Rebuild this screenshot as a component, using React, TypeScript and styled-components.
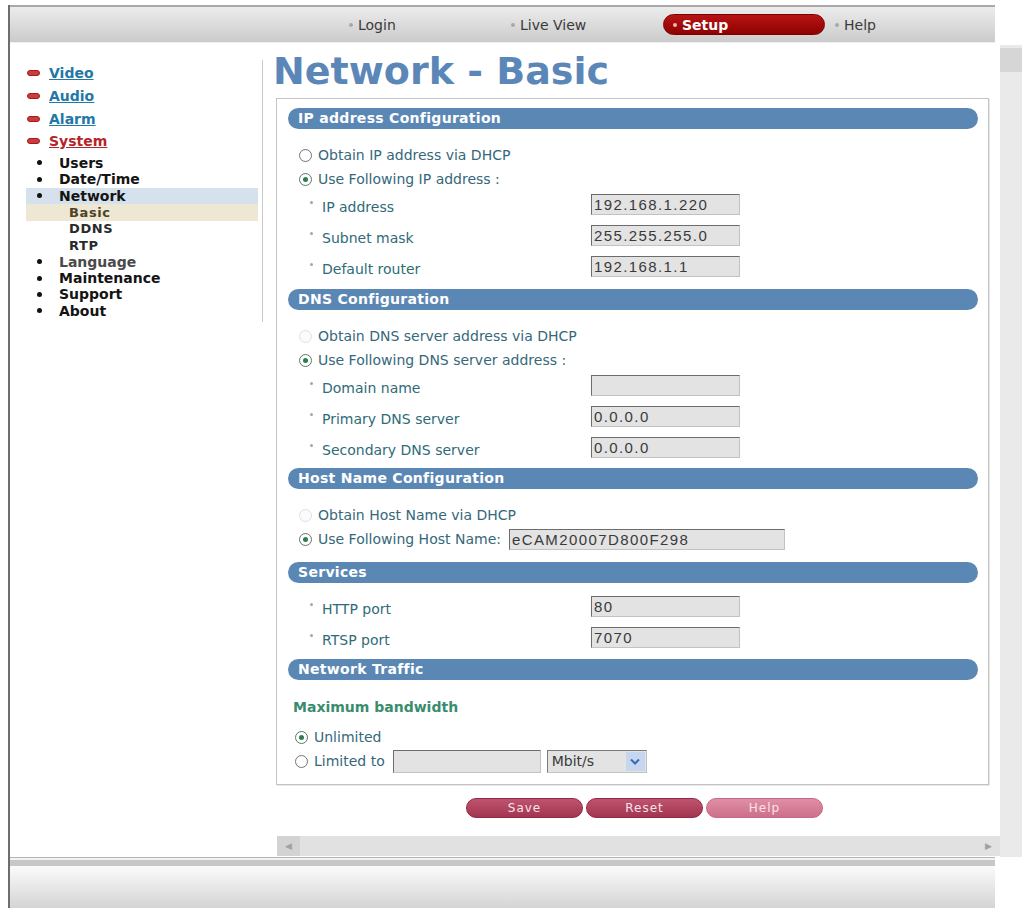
import React from "react";
import styled, { createGlobalStyle } from "styled-components";

const GlobalStyle = createGlobalStyle`
  html, body { margin: 0; padding: 0; background: #ffffff; }
  body { font-family: "DejaVu Sans", Verdana, sans-serif; }
`;

const Page = styled.div`
  width: 1029px;
  height: 912px;
  box-sizing: border-box;
  padding: 5px 0 0 8px;
  overflow: hidden;
  background: #fff;
`;

const Frame = styled.div`
  width: 1014px;
  height: 903px;
  box-sizing: border-box;
  border-left: 2px solid #6e6e6e;
  display: flex;
  flex-direction: column;
`;

const TopBar = styled.div`
  width: 985px;
  height: 38px;
  flex: none;
  box-sizing: border-box;
  border-top: 2px solid #a9a9a9;
  border-bottom: 1px solid #f1f1f1;
  background: linear-gradient(#ececec, #cbcbcb);
  display: flex;
  align-items: center;
  padding-left: 329px;
`;

const NavItem = styled.div<{ $active?: boolean }>`
  width: 162px;
  height: 21px;
  box-sizing: border-box;
  display: flex;
  align-items: center;
  gap: 5px;
  padding-left: 9px;
  border-radius: 11px;
  font-size: 14px;
  font-weight: ${(p) => (p.$active ? 700 : 400)};
  color: ${(p) => (p.$active ? "#ffffff" : "#3a3a3a")};
  background: ${(p) =>
    p.$active ? "linear-gradient(#b81414, #8e0202)" : "transparent"};
  border: ${(p) => (p.$active ? "1px solid #7a0000" : "1px solid transparent")};
`;

const NavDot = styled.span<{ $active?: boolean }>`
  width: 4px;
  height: 4px;
  border-radius: 50%;
  background: ${(p) => (p.$active ? "#f4b4b4" : "#a8a8a8")};
`;

const Middle = styled.div`
  display: flex;
  height: 814px;
  flex: none;
`;

const Sidebar = styled.div`
  width: 253px;
  flex: none;
  padding-top: 17px;
  box-sizing: border-box;
`;

const Menu = styled.div`
  width: 253px;
  box-sizing: border-box;
  border-right: 1px solid #c9c9c9;
  padding: 2px 0 3px 16px;
`;

const MainLink = styled.div`
  height: 22.7px;
  display: flex;
  align-items: center;
  gap: 9px;
  padding-left: 1px;
`;

const Pill = styled.span`
  width: 13px;
  height: 6px;
  box-sizing: border-box;
  border-radius: 3px;
  background: #cf3a3a;
  border: 1px solid #9c1d1d;
`;

const MainLinkText = styled.span<{ $color: string }>`
  font-size: 14px;
  font-weight: 700;
  text-decoration: underline;
  color: ${(p) => p.$color};
`;

const SubList = styled.div`
  margin-top: 2px;
`;

const SubItem = styled.div<{ $bg?: string; $color?: string }>`
  width: 232px;
  height: 16.44px;
  box-sizing: border-box;
  display: flex;
  align-items: center;
  padding-left: 11px;
  font-size: 14px;
  font-weight: 700;
  color: ${(p) => p.$color || "#141414"};
  background: ${(p) => p.$bg || "transparent"};
`;

const Bullet = styled.span`
  width: 5px;
  height: 5px;
  border-radius: 50%;
  background: #111;
  margin-right: 17px;
`;

const SubSubItem = styled.div<{ $bg?: string; $color?: string }>`
  width: 232px;
  height: 16.44px;
  box-sizing: border-box;
  display: flex;
  align-items: center;
  padding-left: 43px;
  font-size: 13px;
  font-weight: 700;
  letter-spacing: 0.6px;
  color: ${(p) => p.$color || "#2a2a2a"};
  background: ${(p) => p.$bg || "transparent"};
`;

const Main = styled.div`
  width: 759px;
  display: grid;
  grid-template-columns: 737px 22px;
  grid-template-rows: 793px 21px;
`;

const Content = styled.div`
  padding-left: 10px;
  overflow: hidden;
`;

const Title = styled.h1`
  margin: 7px 0 0 0;
  height: 43px;
  line-height: 43px;
  font-size: 38px;
  font-weight: 700;
  color: #5b87b8;
  font-family: "DejaVu Sans", Verdana, sans-serif;
`;

const Panel = styled.div`
  margin: 5px 0 0 3px;
  width: 713px;
  box-sizing: border-box;
  border: 1px solid #c4c4c4;
  box-shadow: 1px 1px 0 #e8e8e8;
  padding: 9px 10px 11px 11px;
`;

const SectionHeader = styled.div`
  height: 21px;
  line-height: 21px;
  border-radius: 11px;
  background: #5b87b5;
  color: #ffffff;
  font-size: 14px;
  font-weight: 700;
  letter-spacing: 0.3px;
  padding-left: 10px;
`;

const SectionBody = styled.div<{ $top: number; $bottom: number }>`
  padding-top: ${(p) => p.$top}px;
  padding-bottom: ${(p) => p.$bottom}px;
`;

const RadioRow = styled.div<{ $indent?: number }>`
  height: 24px;
  display: flex;
  align-items: center;
  padding-left: ${(p) => p.$indent ?? 11}px;
  font-size: 14px;
  color: #35687a;
`;

const RadioMark = styled.span<{ $checked?: boolean; $disabled?: boolean }>`
  position: relative;
  width: 13px;
  height: 13px;
  flex: none;
  box-sizing: border-box;
  border-radius: 50%;
  margin-right: 6px;
  border: 1px solid
    ${(p) => (p.$disabled ? "#e0e0e0" : p.$checked ? "#587a64" : "#737373")};
  background: ${(p) => (p.$disabled ? "#fbfbfb" : "#ffffff")};
  &::after {
    content: "";
    display: ${(p) => (p.$checked ? "block" : "none")};
    position: absolute;
    left: 3px;
    top: 3px;
    width: 5px;
    height: 5px;
    border-radius: 50%;
    background: #2f7d4d;
  }
`;

const FieldRow = styled.div`
  height: 31px;
  display: grid;
  grid-template-columns: 303px 149px;
  align-items: start;
`;

const FieldLabel = styled.div`
  height: 31px;
  display: flex;
  align-items: center;
  padding-left: 22px;
  font-size: 14px;
  color: #2f6b78;
`;

const LabelDot = styled.span`
  width: 3px;
  height: 3px;
  border-radius: 50%;
  background: #a0a8aa;
  margin-right: 9px;
  position: relative;
  top: -4px;
`;

const TextBox = styled.input<{ $w: number; $h?: number; $gap?: number }>`
  margin: 3px 0 0 0;
  width: ${(p) => p.$w}px;
  height: ${(p) => p.$h ?? 21}px;
  box-sizing: border-box;
  padding: 0 2px;
  background: #e3e3e3;
  border: 1px solid;
  border-color: #6c6c6c #c2c2c2 #c2c2c2 #6c6c6c;
  font-family: "Liberation Sans", Arial, sans-serif;
  font-size: 15px;
  letter-spacing: 1.4px;
  color: #3a3a3a;
  outline: none;
`;

const InlineBox = styled(TextBox)`
  margin: 0 0 0 ${(p) => p.$gap ?? 8}px;
`;

const Heading = styled.div`
  height: 26px;
  line-height: 26px;
  padding-left: 5px;
  font-size: 14px;
  font-weight: 700;
  color: #3a8c6e;
  margin-bottom: 5px;
`;

const SelectBox = styled.div`
  margin-left: 6px;
  width: 100px;
  height: 23px;
  box-sizing: border-box;
  border: 1px solid;
  border-color: #7a7a7a #c2c2c2 #c2c2c2 #7a7a7a;
  background: #e3e3e3;
  display: flex;
  align-items: center;
  justify-content: space-between;
  padding: 0 1px 0 4px;
  font-size: 14px;
  color: #3a3a3a;
`;

const ArrowBox = styled.span`
  width: 19px;
  height: 19px;
  background: #c6d6ee;
  display: flex;
  align-items: center;
  justify-content: center;
`;

const ButtonRow = styled.div`
  margin: 13px 0 0 193px;
  display: flex;
  gap: 3px;
`;

const PinkButton = styled.div<{ $light?: boolean }>`
  width: 117px;
  height: 20px;
  box-sizing: border-box;
  border-radius: 10px;
  display: flex;
  align-items: center;
  justify-content: center;
  font-size: 12px;
  letter-spacing: 1px;
  color: #f7e2e8;
  border: 1px solid ${(p) => (p.$light ? "#c86a86" : "#8f2a46")};
  background: ${(p) =>
    p.$light
      ? "linear-gradient(#e08ea6, #cd6f8b)"
      : "linear-gradient(#bf5470, #a2354f)"};
`;

const HScroll = styled.div`
  margin-left: 14px;
  height: 20px;
  background: #e1e1e1;
  display: flex;
  justify-content: space-between;
  align-items: stretch;
`;

const ScrollArrow = styled.span<{ $dark?: boolean }>`
  width: 23px;
  display: flex;
  align-items: center;
  justify-content: center;
  background: ${(p) => (p.$dark ? "#d3d3d3" : "transparent")};
  color: #a2a2a2;
  font-size: 9px;
`;

const VScroll = styled.div`
  grid-column: 2;
  grid-row: 1 / 3;
  margin-top: 2px;
  background: #eaeaea;
  display: flex;
  flex-direction: column;
`;

const VThumb = styled.div`
  margin-top: 3px;
  height: 24px;
  background: #d6d6d6;
`;

const Footer = styled.div`
  width: 985px;
  height: 51px;
  flex: none;
  box-sizing: border-box;
  border-top: 1px solid #b5b5b5;
  background: linear-gradient(
    to bottom,
    #f3f3f3 0px,
    #f3f3f3 2px,
    #c7c7c7 2px,
    #c7c7c7 8px,
    #fbfbfb 8px,
    #d4d4d4 100%
  );
`;

type Field = { label: string; value: string };

const FieldRows = ({ fields }: { fields: Field[] }) => (
  <>
    {fields.map((f) => (
      <FieldRow key={f.label}>
        <FieldLabel>
          <LabelDot />
          {f.label}
        </FieldLabel>
        <TextBox $w={149} value={f.value} readOnly />
      </FieldRow>
    ))}
  </>
);

export default function App() {
  return (
    <>
      <GlobalStyle />
      <Page>
        <Frame>
          <TopBar>
            <NavItem>
              <NavDot />
              Login
            </NavItem>
            <NavItem>
              <NavDot />
              Live View
            </NavItem>
            <NavItem $active>
              <NavDot $active />
              Setup
            </NavItem>
            <NavItem>
              <NavDot />
              Help
            </NavItem>
          </TopBar>

          <Middle>
            <Sidebar>
              <Menu>
                <MainLink>
                  <Pill />
                  <MainLinkText $color="#1f78a6">Video</MainLinkText>
                </MainLink>
                <MainLink>
                  <Pill />
                  <MainLinkText $color="#1f78a6">Audio</MainLinkText>
                </MainLink>
                <MainLink>
                  <Pill />
                  <MainLinkText $color="#1f78a6">Alarm</MainLinkText>
                </MainLink>
                <MainLink>
                  <Pill />
                  <MainLinkText $color="#b3262b">System</MainLinkText>
                </MainLink>
                <SubList>
                  <SubItem>
                    <Bullet />
                    Users
                  </SubItem>
                  <SubItem>
                    <Bullet />
                    Date/Time
                  </SubItem>
                  <SubItem $bg="#d5e1ec">
                    <Bullet />
                    Network
                  </SubItem>
                  <SubSubItem $bg="#ede7d3" $color="#4f4226">
                    Basic
                  </SubSubItem>
                  <SubSubItem>DDNS</SubSubItem>
                  <SubSubItem>RTP</SubSubItem>
                  <SubItem $color="#4a4a4a">
                    <Bullet />
                    Language
                  </SubItem>
                  <SubItem>
                    <Bullet />
                    Maintenance
                  </SubItem>
                  <SubItem>
                    <Bullet />
                    Support
                  </SubItem>
                  <SubItem>
                    <Bullet />
                    About
                  </SubItem>
                </SubList>
              </Menu>
            </Sidebar>

            <Main>
              <Content>
                <Title>Network - Basic</Title>
                <Panel>
                  <SectionHeader>IP address Configuration</SectionHeader>
                  <SectionBody $top={14} $bottom={5}>
                    <RadioRow>
                      <RadioMark />
                      Obtain IP address via DHCP
                    </RadioRow>
                    <RadioRow>
                      <RadioMark $checked />
                      Use Following IP address :
                    </RadioRow>
                    <FieldRows
                      fields={[
                        { label: "IP address", value: "192.168.1.220" },
                        { label: "Subnet mask", value: "255.255.255.0" },
                        { label: "Default router", value: "192.168.1.1" },
                      ]}
                    />
                  </SectionBody>

                  <SectionHeader>DNS Configuration</SectionHeader>
                  <SectionBody $top={14} $bottom={3}>
                    <RadioRow>
                      <RadioMark $disabled />
                      Obtain DNS server address via DHCP
                    </RadioRow>
                    <RadioRow>
                      <RadioMark $checked />
                      Use Following DNS server address :
                    </RadioRow>
                    <FieldRows
                      fields={[
                        { label: "Domain name", value: "" },
                        { label: "Primary DNS server", value: "0.0.0.0" },
                        { label: "Secondary DNS server", value: "0.0.0.0" },
                      ]}
                    />
                  </SectionBody>

                  <SectionHeader>Host Name Configuration</SectionHeader>
                  <SectionBody $top={14} $bottom={11}>
                    <RadioRow>
                      <RadioMark $disabled />
                      Obtain Host Name via DHCP
                    </RadioRow>
                    <RadioRow>
                      <RadioMark $checked />
                      Use Following Host Name:
                      <InlineBox $w={276} $gap={8} value="eCAM20007D800F298" readOnly />
                    </RadioRow>
                  </SectionBody>

                  <SectionHeader>Services</SectionHeader>
                  <SectionBody $top={10} $bottom={4}>
                    <FieldRows
                      fields={[
                        { label: "HTTP port", value: "80" },
                        { label: "RTSP port", value: "7070" },
                      ]}
                    />
                  </SectionBody>

                  <SectionHeader>Network Traffic</SectionHeader>
                  <SectionBody $top={14} $bottom={0}>
                    <Heading>Maximum bandwidth</Heading>
                    <RadioRow $indent={7}>
                      <RadioMark $checked />
                      Unlimited
                    </RadioRow>
                    <RadioRow $indent={7}>
                      <RadioMark />
                      Limited to
                      <InlineBox $w={148} $h={23} $gap={8} value="" readOnly />
                      <SelectBox>
                        Mbit/s
                        <ArrowBox>
                          <svg width="10" height="7" viewBox="0 0 10 7">
                            <path
                              d="M1 1.5 L5 5.5 L9 1.5"
                              fill="none"
                              stroke="#3568b8"
                              strokeWidth="2"
                            />
                          </svg>
                        </ArrowBox>
                      </SelectBox>
                    </RadioRow>
                  </SectionBody>
                </Panel>

                <ButtonRow>
                  <PinkButton>Save</PinkButton>
                  <PinkButton>Reset</PinkButton>
                  <PinkButton $light>Help</PinkButton>
                </ButtonRow>
              </Content>

              <VScroll>
                <VThumb />
              </VScroll>

              <HScroll>
                <ScrollArrow $dark>◀</ScrollArrow>
                <ScrollArrow>▶</ScrollArrow>
              </HScroll>
            </Main>
          </Middle>

          <Footer />
        </Frame>
      </Page>
    </>
  );
}
